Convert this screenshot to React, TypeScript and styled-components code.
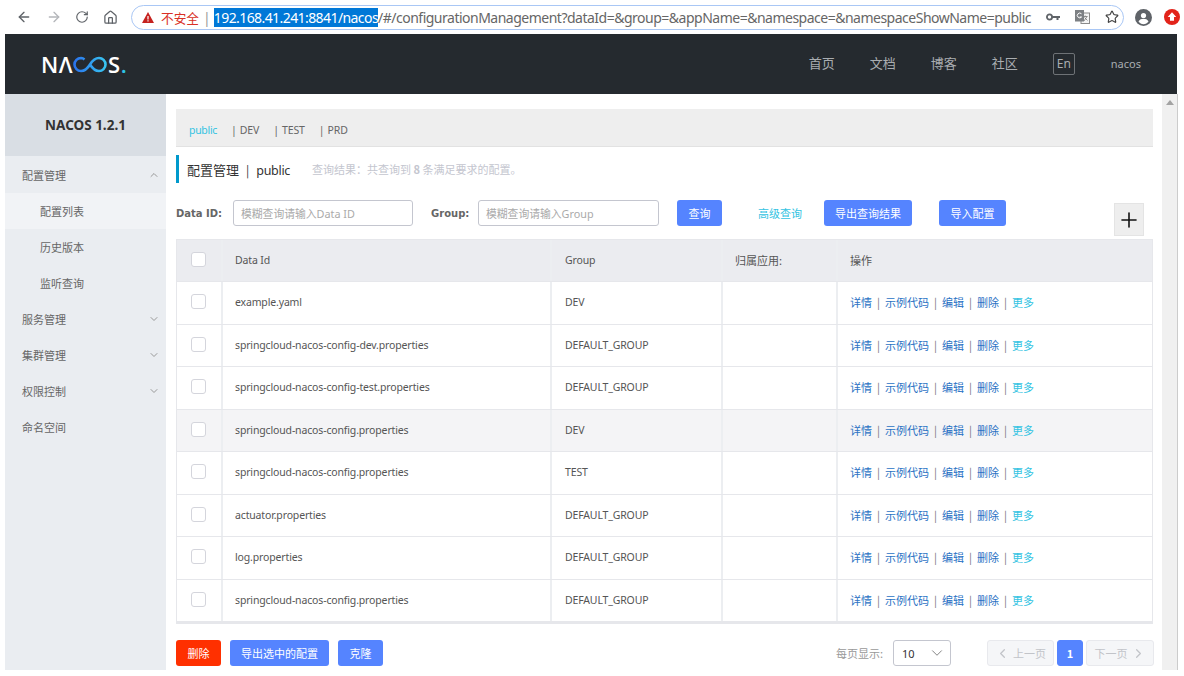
import React from "react";
import styled, { createGlobalStyle } from "styled-components";
import { ArrowLeft, ArrowRight, RotateCw, Home, Star, ChevronDown, ChevronUp, ChevronLeft, ChevronRight, Plus } from "lucide-react";

const Global = createGlobalStyle`
  html, body { margin: 0; padding: 0; background: #fff; overflow: hidden; }
  * { box-sizing: border-box; }
  body { font-family: "Noto Sans", "Noto Sans CJK SC", sans-serif; }
`;
const Page = styled.div`width: 1184px; height: 676px; overflow: hidden; background: #fff; display: flex; flex-direction: column;`;
const BrowserBar = styled.div`height: 34px; flex: none; display: flex; align-items: center; padding: 0 0 0 16px; color: #5f6368;`;
const NavIcons = styled.div`display: flex; align-items: center; gap: 13.5px; width: 115px; flex: none;`;
const NavIcon = styled.span<{ $muted?: boolean }>`display: flex; color: ${p => (p.$muted ? "#b4b6ba" : "#5f6368")};`;
const UrlPill = styled.div`width: 993px; height: 25px; flex: none; border: 1.5px solid #a9c7f5; border-radius: 13px; display: flex; align-items: center; padding: 0 10px; font-size: 14px; color: #666; white-space: nowrap;`;
const Warn = styled.svg`flex: none; margin-right: 7px;`;
const Insecure = styled.span`color: #d93025; font-size: 12.700px; flex: none;`;
const UrlSep = styled.span`color: #999; margin: 0 3px 0 4px; flex: none;`;
const UrlText = styled.div`width: 820px; flex: none; letter-spacing: -0.5px;`;
const Selected = styled.span`background: #0078d7; color: #fff; letter-spacing: -0.58px;`;
const PillIcons = styled.div`display: flex; align-items: center; gap: 15px; margin-left: 12px; flex: none;`;
const Ext = styled.div`display: flex; align-items: center; gap: 12px; margin-left: 11px; flex: none;`;

const Frame = styled.div`margin-left: 5px; width: 1174px; flex: 1; display: flex; flex-direction: column; position: relative;`;
const Header = styled.header`height: 60px; flex: none; width: 1172px; background: #252a2f; display: flex; align-items: center; padding: 0 36px 0 36px;`;
const Logo = styled.div`display: flex; align-items: center; color: #fff; font-family: "Open Sans", sans-serif; font-weight: 600; font-size: 22px; line-height: 1; letter-spacing: 0.5px; flex: none;`;
const LogoDot = styled.span`color: #2ec4e6;`;
const LogoMark = styled.svg`margin: 1px 1px 0 0;`;
const HeaderNav = styled.nav`margin-left: auto; display: flex; align-items: center; color: #a9adb1; font-size: 13px; padding-bottom: 1px;`;
const HeaderLink = styled.span`width: 61px; flex: none; font-family: "Noto Sans CJK SC", sans-serif; position: relative; top: -1px;`;
const Lang = styled.span`width: 22px; height: 22px; border: 1px solid #6e7276; border-radius: 2px; display: flex; align-items: center; justify-content: center; font-size: 12px; margin-right: 36px;`;
const User = styled.span`font-size: 11px; color: #a9adb1;`;

const Body = styled.div`height: 576px; flex: none; display: flex;`;
const Sidebar = styled.aside`width: 161px; flex: none; background: #eaedf1; font-family: "Noto Sans CJK SC", sans-serif;`;
const SideTitle = styled.div`height: 62px; background: #d9dee4; display: flex; align-items: center; justify-content: center; font-family: "Noto Sans", sans-serif; font-weight: 700; font-size: 13.500px; color: #333; padding-bottom: 1px;`;
const SideItem = styled.div<{ $sub?: boolean; $active?: boolean }>`height: 36px; display: flex; align-items: center; justify-content: space-between; padding: 0 6px 0 ${p => (p.$sub ? 35 : 17)}px; font-size: 11px; color: #666; background: ${p => (p.$active ? "#f1f3f6" : "transparent")};`;
const SideGap = styled.div`height: 1px;`;

const Main = styled.main`width: 996px; flex: none; padding: 15px 0 0 10px; font-size: 11px; color: #555;`;
const Tabs = styled.div`width: 977px; height: 38px; background: #eeeeee; border-bottom: 1px solid #e2e2e2; display: flex; align-items: center; padding: 4px 0 0 13px; color: #666; font-size: 10.500px;`;
const Tab = styled.span<{ $active?: boolean }>`flex: none; margin-right: 14px; letter-spacing: ${p => (p.$active ? -0.3 : -0.1)}px; color: ${p => (p.$active ? "#33c3e2" : "#666")};`;
const TabBar = styled.span`margin-right: 3px; color: #666;`;
const TitleRow = styled.div`height: 28px; margin-top: 8px; border-left: 3px solid #09c; display: flex; align-items: center; padding-left: 8px;`;
const Title = styled.span`font-size: 13px; color: #333; font-family: "Noto Sans CJK SC", sans-serif; flex: none;`;
const TitleSep = styled.span`margin: 0 7px; font-size: 12px;`;
const TitleName = styled.span`font-family: "Noto Sans", sans-serif; font-size: 12.500px; letter-spacing: -0.3px;`;
const TitleHint = styled.span`margin-left: 22px; color: #c4c6cf; font-size: 11px; font-family: "Noto Sans CJK SC", sans-serif;`;
const SearchRow = styled.div`height: 39px; margin-top: 17px; width: 968px; display: flex; align-items: flex-start;`;
const Label = styled.span<{ $w: number; $ml?: number }>`font-family: "DejaVu Sans", sans-serif; font-weight: 700; font-size: 10px; color: #666; width: ${p => p.$w}px; margin-left: ${p => p.$ml ?? 0}px; height: 26px; display: flex; align-items: center; flex: none;`;
const Input = styled.div<{ $w: number }>`width: ${p => p.$w}px; height: 26px; flex: none; border: 1px solid #c4c6cf; border-radius: 3px; display: flex; align-items: center; padding: 0 7px; color: #aaa; font-size: 10.800px; font-family: "Noto Sans", "Noto Sans CJK SC", sans-serif;`;
const Btn = styled.div<{ $w: number; $ml?: number; $red?: boolean }>`width: ${p => p.$w}px; height: 26px; margin-left: ${p => p.$ml ?? 0}px; flex: none; border-radius: 3px; background: ${p => (p.$red ? "#ff3000" : "#5584ff")}; color: #fff; font-size: 11px; display: flex; align-items: center; justify-content: center; font-family: "Noto Sans CJK SC", sans-serif;`;
const AdvLink = styled.span`color: #33c3e2; margin-left: 36px; width: 66px; flex: none; font-family: "Noto Sans CJK SC", sans-serif;`;
const AdvWrap = styled.div`height: 26px; display: flex; align-items: center; flex: none;`;
const PlusBox = styled.div`width: 30px; height: 33px; margin: 3px 0 0 108px; flex: none; background: #eee; border: 1px solid #e4e4e4; display: flex; align-items: center; justify-content: center; color: #111;`;

const TableEl = styled.div`width: 977px; border: 1px solid #e6e7eb; border-bottom-width: 2px;`;
const Grid = styled.div<{ $head?: boolean; $alt?: boolean }>`display: grid; grid-template-columns: 44px 329px 171px 115px 1fr; height: ${p => (p.$head ? 42 : 42.5)}px; background: ${p => (p.$head ? "#ebecf0" : p.$alt ? "#f4f4f6" : "#fff")}; border-bottom: 1px solid #e6e7eb; color: #555; font-size: 10.500px; letter-spacing: -0.15px;`;
const Cell = styled.div<{ $pad?: number }>`display: flex; align-items: center; padding-left: ${p => p.$pad ?? 12}px; padding-bottom: 1px; border-left: 2px solid #eceef1; white-space: nowrap;`;
const CjkHead = styled.span`font-family: "Noto Sans CJK SC", sans-serif; font-size: 11px; letter-spacing: 0;`;
const CheckCell = styled.div`display: flex; align-items: center; justify-content: center; padding: 0 2px 2px 0;`;
const Check = styled.span`width: 15px; height: 15px; border: 1px solid #d4d5dc; border-radius: 3px; background: #fff;`;
const Actions = styled.span`display: flex; align-items: center; font-family: "Noto Sans CJK SC", sans-serif; color: #2a72c4; font-size: 11px; letter-spacing: 0;`;
const Sep = styled.span`margin: 0 5px; color: #777;`;
const More = styled.span`color: #33c3e2;`;

const Footer = styled.div`width: 978px; height: 26px; margin-top: 16px; display: flex; align-items: center;`;
const PageLabel = styled.span`margin-left: auto; color: #999; font-family: "Noto Sans CJK SC", sans-serif; font-size: 11px; margin-right: 1px;`;
const Select = styled.div`width: 58px; height: 26px; margin-left: 9px; border: 1px solid #c4c6cf; border-radius: 3px; display: flex; align-items: center; justify-content: space-between; padding: 0 4px 0 8px; color: #333; font-size: 11px;`;
const PageBtn = styled.div<{ $w: number; $ml: number; $cur?: boolean }>`width: ${p => p.$w}px; height: 26px; margin-left: ${p => p.$ml}px; border-radius: 3px; display: flex; align-items: center; justify-content: center; gap: 3px; background: ${p => (p.$cur ? "#5584ff" : "#f5f6f8")}; border: 1px solid ${p => (p.$cur ? "#5584ff" : "#e8e9ed")}; color: ${p => (p.$cur ? "#fff" : "#c2c4c9")}; font-size: 11px; font-weight: ${p => (p.$cur ? 700 : 400)}; font-family: "Noto Sans CJK SC", sans-serif;`;

const Scrollbar = styled.div`width: 16px; flex: none; background: #f0f0f0; display: flex; justify-content: center; padding-top: 6px; border-right: 1px solid #ccc;`;
const ScrollUp = styled.span`width: 0; height: 0; border-left: 4px solid transparent; border-right: 4px solid transparent; border-bottom: 5px solid #a3a3a3;`;

const rows: [string, string][] = [
  ["example.yaml", "DEV"],
  ["springcloud-nacos-config-dev.properties", "DEFAULT_GROUP"],
  ["springcloud-nacos-config-test.properties", "DEFAULT_GROUP"],
  ["springcloud-nacos-config.properties", "DEV"],
  ["springcloud-nacos-config.properties", "TEST"],
  ["actuator.properties", "DEFAULT_GROUP"],
  ["log.properties", "DEFAULT_GROUP"],
  ["springcloud-nacos-config.properties", "DEFAULT_GROUP"],
];

export default function App() {
  return (
    <Page>
      <Global />
      <BrowserBar>
        <NavIcons>
          <NavIcon><ArrowLeft size={16} /></NavIcon>
          <NavIcon $muted><ArrowRight size={16} /></NavIcon>
          <NavIcon><RotateCw size={14} /></NavIcon>
          <NavIcon><Home size={15} /></NavIcon>
        </NavIcons>
        <UrlPill>
          <Warn width="12" height="11" viewBox="0 0 12 11"><path d="M6 0 12 11H0Z" fill="#c5221f" /><path d="M5.4 4h1.2v3.500H5.4zM5.4 8.200h1.2v1.200H5.4z" fill="#fff" /></Warn>
          <Insecure>不安全</Insecure>
          <UrlSep>|</UrlSep>
          <UrlText><Selected>192.168.41.241:8841/nacos</Selected>/#/configurationManagement?dataId=&amp;group=&amp;appName=&amp;namespace=&amp;namespaceShowName=public</UrlText>
          <PillIcons>
            <svg width="14" height="8" viewBox="0 0 14 8"><circle cx="3.500" cy="4" r="2.600" fill="none" stroke="#5f6368" strokeWidth="1.800" /><path d="M6 3h8v2h-1.500v2h-2V5H6z" fill="#5f6368" /></svg>
            <svg width="15" height="14" viewBox="0 0 15 14">
              <rect x="6" y="3" width="8.500" height="10.500" fill="#f4f4f4" stroke="#8a8a8a" />
              <path d="M8 6.500h4.500M10.200 5.500v1M9 11l3-4.500M9.500 7.500l3 3" stroke="#777" strokeWidth="0.800" fill="none" />
              <rect x="0" y="0" width="9" height="11.500" fill="#7d8084" />
              <path d="M6.500 3.800A2.400 2.400 0 1 0 6.600 7H4.700" fill="none" stroke="#fff" strokeWidth="1" />
            </svg>
            <Star size={14} color="#444" />
          </PillIcons>
        </UrlPill>
        <Ext>
          <svg width="17" height="17" viewBox="0 0 17 17"><circle cx="8.500" cy="8.500" r="8.500" fill="#5f6368" /><circle cx="8.500" cy="6.500" r="2.600" fill="#fff" /><path d="M3.500 12.500c1-2 3-2.700 5-2.700s4 .7 5 2.700a6 6 0 0 1-10 0z" fill="#fff" /></svg>
          <svg width="16" height="16" viewBox="0 0 15 15"><circle cx="7.500" cy="7.500" r="7.500" fill="#e2231a" /><path d="M7.500 3 11.500 7.500H9.400V11H5.600V7.500H3.500Z" fill="#fff" /></svg>
        </Ext>
      </BrowserBar>
      <Frame>
        <Header>
          <Logo>
            <span>NΛ</span>
            <LogoMark width="34" height="17" viewBox="0 0 34 17">
              <defs>
                <linearGradient id="inf" x1="0" x2="1"><stop offset="0" stopColor="#2a74ee" /><stop offset="1" stopColor="#38c4f0" /></linearGradient>
              </defs>
              <path d="M11.500 3.400A6.700 6.700 0 0 0 8 2a6.500 6.500 0 0 0 0 13c3 0 6.200-2 9-6.500S23 2 26 2a6.500 6.500 0 0 1 0 13c-3 0-6.200-2-9-6.500" fill="none" stroke="url(#inf)" strokeWidth="2.600" />
            </LogoMark>
            <span>S<LogoDot>.</LogoDot></span>
          </Logo>
          <HeaderNav>
            <HeaderLink>首页</HeaderLink>
            <HeaderLink>文档</HeaderLink>
            <HeaderLink>博客</HeaderLink>
            <HeaderLink>社区</HeaderLink>
            <Lang>En</Lang>
            <User>nacos</User>
          </HeaderNav>
        </Header>
        <Body>
          <Sidebar>
            <SideTitle>NACOS 1.2.1</SideTitle>
            <SideGap />
            <SideItem>配置管理<ChevronUp size={12} color="#999" /></SideItem>
            <SideItem $sub $active>配置列表</SideItem>
            <SideItem $sub>历史版本</SideItem>
            <SideItem $sub>监听查询</SideItem>
            <SideItem>服务管理<ChevronDown size={12} color="#999" /></SideItem>
            <SideItem>集群管理<ChevronDown size={12} color="#999" /></SideItem>
            <SideItem>权限控制<ChevronDown size={12} color="#999" /></SideItem>
            <SideItem>命名空间</SideItem>
          </Sidebar>
          <Main>
            <Tabs>
              <Tab $active>public</Tab>
              <Tab><TabBar>|</TabBar>DEV</Tab>
              <Tab><TabBar>|</TabBar>TEST</Tab>
              <Tab><TabBar>|</TabBar>PRD</Tab>
            </Tabs>
            <TitleRow>
              <Title>配置管理<TitleSep>|</TitleSep><TitleName>public</TitleName></Title>
              <TitleHint>查询结果：共查询到 <b>8</b> 条满足要求的配置。</TitleHint>
            </TitleRow>
            <SearchRow>
              <Label $w={57}>Data ID:</Label>
              <Input $w={180}>模糊查询请输入Data ID</Input>
              <Label $w={47} $ml={18}>Group:</Label>
              <Input $w={181}>模糊查询请输入Group</Input>
              <Btn $w={45} $ml={18}>查询</Btn>
              <AdvWrap><AdvLink>高级查询</AdvLink></AdvWrap>
              <Btn $w={88}>导出查询结果</Btn>
              <Btn $w={67} $ml={27}>导入配置</Btn>
              <PlusBox><Plus size={24} strokeWidth={1.6} /></PlusBox>
            </SearchRow>
            <TableEl>
              <Grid $head>
                <CheckCell><Check /></CheckCell>
                <Cell>Data Id</Cell>
                <Cell $pad={13}>Group</Cell>
                <Cell><CjkHead>归属应用:</CjkHead></Cell>
                <Cell><CjkHead>操作</CjkHead></Cell>
              </Grid>
              {rows.map(([id, group], i) => (
                <Grid key={i} $alt={i === 3}>
                  <CheckCell><Check /></CheckCell>
                  <Cell>{id}</Cell>
                  <Cell $pad={13}>{group}</Cell>
                  <Cell />
                  <Cell>
                    <Actions>详情<Sep>|</Sep>示例代码<Sep>|</Sep>编辑<Sep>|</Sep>删除<Sep>|</Sep><More>更多</More></Actions>
                  </Cell>
                </Grid>
              ))}
            </TableEl>
            <Footer>
              <Btn $w={45} $red>删除</Btn>
              <Btn $w={99} $ml={9}>导出选中的配置</Btn>
              <Btn $w={45} $ml={9}>克隆</Btn>
              <PageLabel>每页显示:</PageLabel>
              <Select>10<ChevronDown size={18} strokeWidth={1.2} color="#777" /></Select>
              <PageBtn $w={67} $ml={36}><ChevronLeft size={15} />上一页</PageBtn>
              <PageBtn $w={26} $ml={3} $cur>1</PageBtn>
              <PageBtn $w={68} $ml={3}>下一页<ChevronRight size={15} /></PageBtn>
            </Footer>
          </Main>
          <Scrollbar><ScrollUp /></Scrollbar>
        </Body>
      </Frame>
    </Page>
  );
}
